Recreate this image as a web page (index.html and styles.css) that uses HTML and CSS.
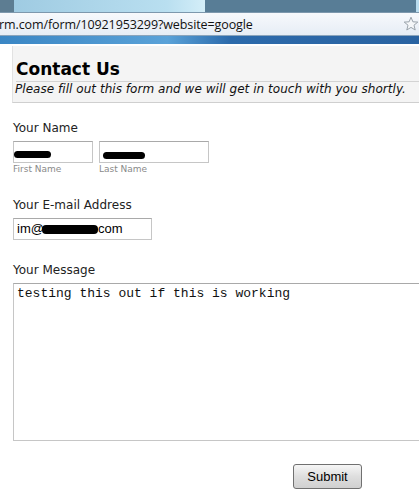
FILE: index.html
```html
<!DOCTYPE html>
<html lang="en">
<head>
  <meta charset="UTF-8">
  <title>Contact Us</title>
  <link rel="stylesheet" href="styles.css">
</head>
<body>
  <div class="chrome">
    <div class="tabs">
      <span class="tab-left"></span>
      <span class="tab-gap"></span>
      <span class="tab-right"></span>
    </div>
    <div class="address">
      <span class="url">rm.com/form/10921953299?website=google</span>
      <svg class="star" width="16" height="16" viewBox="0 0 16 16">
        <path d="M8 1.2 L9.9 5.8 L14.8 6.1 L11 9.2 L12.2 14 L8 11.4 L3.8 14 L5 9.2 L1.2 6.1 L6.1 5.8 Z" fill="#f4f6f8" stroke="#9aa3ab" stroke-width="1"/>
      </svg>
    </div>
    <div class="band"></div>
  </div>

  <div class="page">
    <div class="header">
      <h1>Contact Us</h1>
      <p class="sub">Please fill out this form and we will get in touch with you shortly.</p>
    </div>

    <form class="form">
      <div class="field">
        <label>Your Name</label>
        <div class="name-row">
          <div class="name-part">
            <div class="box first"><span class="blot blot-first"></span></div>
            <span class="hint">First Name</span>
          </div>
          <div class="name-part">
            <div class="box last"><span class="blot blot-last"></span></div>
            <span class="hint">Last Name</span>
          </div>
        </div>
      </div>

      <div class="field">
        <label>Your E-mail Address</label>
        <div class="box email">im@<span class="blot blot-mail"></span>com</div>
      </div>

      <div class="field">
        <label>Your Message</label>
        <div class="box message">testing this out if this is working</div>
      </div>

      <div class="actions">
        <button type="button">Submit</button>
      </div>
    </form>
  </div>
</body>
</html>
```

FILE: styles.css
```css
html, body {
  margin: 0;
  padding: 0;
  background: #fff;
  overflow: hidden;
}
body {
  width: 419px;
  height: 492px;
  font-family: "DejaVu Sans", Verdana, sans-serif;
}
.chrome {
  width: 419px;
}
.tabs {
  display: flex;
  height: 12px;
}
.tab-left {
  width: 14px;
  background: #5d7d92;
}
.tab-gap {
  width: 191px;
  background: linear-gradient(to right, #9fcbe2, #b9dff0 80%, #d4eef8);
}
.tab-right {
  flex: 1;
  background: #587d96;
  border-right: 3px solid #b9dcee;
}
.address {
  height: 22px;
  display: flex;
  align-items: center;
  justify-content: space-between;
  background: linear-gradient(#f7f9fc, #e6edf5);
  border-top: 1px solid #7d98ad;
  border-bottom: 1px solid #8aa4bb;
}
.url {
  font-family: "Open Sans", "DejaVu Sans", sans-serif;
  font-size: 12.5px;
  color: #111;
  margin-left: -1px;
  letter-spacing: -0.1px;
}
.band {
  height: 8px;
  background: linear-gradient(to right, #3a86c4, #5aa2d8 40%, #2c6aab 55%, #2a63a1);
}
.page {
  padding: 2px 0 0 0;
}
.header {
  margin-left: 12px;
  background: #f4f4f4;
  border-left: 1px solid #e2e2e2;
  border-bottom: 1px solid #cfcfcf;
  padding: 13px 0 6px 3px;
}
h1 {
  margin: 0;
  font-size: 17px;
  font-weight: bold;
  color: #000;
  line-height: 20px;
  padding-bottom: 2px;
  border-bottom: 1px solid #d3d3d3;
}
.sub {
  margin: 0 0 0 -1px;
  font-size: 12px;
  font-style: italic;
  color: #111;
  line-height: 14px;
  white-space: nowrap;
  letter-spacing: 0.04px;
}
.form {
  padding: 18px 0 0 13px;
  display: flex;
  flex-direction: column;
}
.field {
  display: flex;
  flex-direction: column;
  margin-bottom: 23px;
}
label {
  font-size: 12px;
  color: #222;
  line-height: 14px;
  margin-bottom: 6px;
}
.name-row {
  display: flex;
  gap: 6px;
}
.name-part {
  display: flex;
  flex-direction: column;
}
.box {
  box-sizing: border-box;
  border: 1px solid #c6c6c6;
  border-top-color: #a9a9a9;
  background: #fff;
  position: relative;
}
.first {
  width: 80px;
  height: 22px;
}
.last {
  width: 110px;
  height: 22px;
}
.hint {
  font-size: 9px;
  color: #8a8a8a;
  line-height: 11px;
  margin-top: 1px;
}
.blot {
  display: inline-block;
  background: #000;
  border-radius: 4px;
}
.blot-first {
  position: absolute;
  left: 0;
  top: 9px;
  width: 37px;
  height: 7px;
}
.blot-last {
  position: absolute;
  left: 3px;
  top: 10px;
  width: 42px;
  height: 7px;
}
.email {
  width: 139px;
  height: 22px;
  font-family: "Liberation Sans", Arial, sans-serif;
  font-size: 13px;
  line-height: 20px;
  padding-left: 3px;
  color: #000;
}
.blot-mail {
  width: 56px;
  height: 9px;
  vertical-align: -1px;
  margin-left: -2px;
}
.message {
  width: 420px;
  height: 158px;
  border-right: none;
  font-family: "Liberation Mono", "Courier New", monospace;
  font-size: 13px;
  line-height: 16px;
  padding: 2px 3px;
  color: #111;
}
.actions {
  padding-left: 280px;
}
button {
  width: 69px;
  height: 25px;
  font-family: "Liberation Sans", Arial, sans-serif;
  font-size: 13px;
  color: #000;
  background: linear-gradient(#f6f6f6, #dedede 50%, #d0d0d0);
  border: 1px solid #707070;
  border-radius: 3px;
  padding: 0;
}
```
